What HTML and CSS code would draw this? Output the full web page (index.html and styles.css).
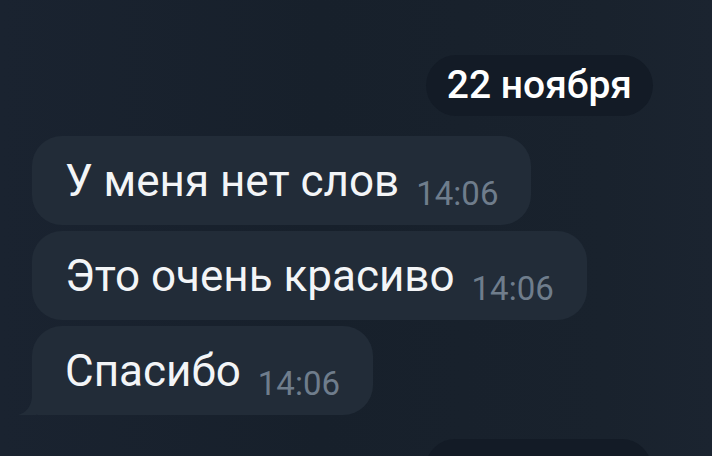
FILE: index.html
```html
<!DOCTYPE html>
<html lang="ru">
<head>
  <meta charset="UTF-8">
  <title>Чат</title>
  <link rel="stylesheet" href="styles.css">
</head>
<body>
  <div class="chat">
    <div class="date-pill">22 ноября</div>

    <div class="messages">
      <div class="bubble">
        <span class="text">У меня нет слов</span><span class="time">14:06</span>
      </div>
      <div class="bubble">
        <span class="text">Это очень красиво</span><span class="time">14:06</span>
      </div>
      <div class="bubble last">
        <span class="text">Спасибо</span><span class="time">14:06</span>
        <svg class="tail" width="18" height="24" viewBox="0 0 18 24">
          <path d="M18 0 L18 24 L0 24 C8 22 13 16 14 6 L14 0 Z" fill="#222c38"/>
        </svg>
      </div>
    </div>

    <div class="date-pill next">23 ноября</div>
  </div>
</body>
</html>
```

FILE: styles.css
```css
html, body {
  margin: 0;
  height: 100%;
}

body {
  font-family: Roboto, 'Noto Sans', sans-serif;
  background: linear-gradient(90deg, #1a2330 0%, #17202b 45%, #19222d 85%, #1b2430 100%);
  color: #f3f5f7;
  overflow: hidden;
}

.chat {
  display: flex;
  flex-direction: column;
  padding-top: 55px;
}

.date-pill {
  align-self: flex-end;
  margin-right: 59px;
  height: 61px;
  line-height: 61px;
  padding: 0 21px;
  border-radius: 31px;
  background-color: #131b26;
  font-weight: 500;
  font-size: 39px;
  color: #fff;
}

.date-pill.next {
  margin-top: 24px;
  margin-right: 60px;
  line-height: 72px;
}

.messages {
  display: flex;
  flex-direction: column;
  align-items: flex-start;
  gap: 6px;
  margin-top: 20px;
  padding-left: 32px;
}

.bubble {
  position: relative;
  background-color: #222c38;
  border-radius: 30px;
  padding: 21px 33px 20px 33px;
  height: 48px;
  white-space: nowrap;
}

.bubble.last {
  border-bottom-left-radius: 6px;
}

.text {
  font-size: 44px;
  line-height: 48px;
}

.time {
  display: inline-block;
  margin-left: 17px;
  font-size: 33px;
  line-height: 20px;
  color: #6f7d8c;
  vertical-align: -9px;
}

.tail {
  position: absolute;
  left: -14px;
  bottom: 0;
}
```
